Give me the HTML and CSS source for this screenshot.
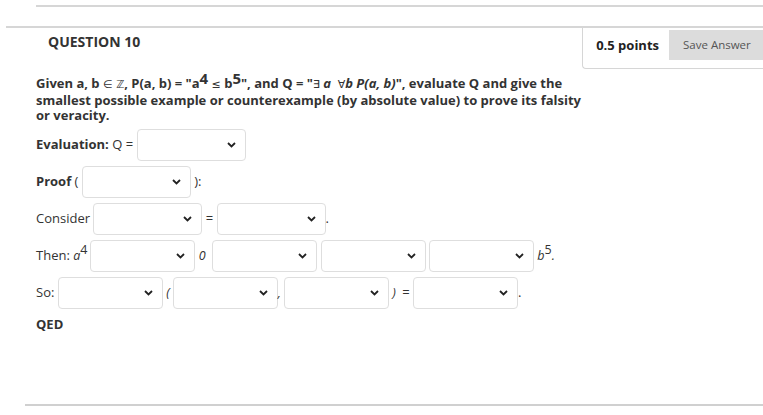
FILE: index.html
```html
<!DOCTYPE html>
<html>
<head>
	<title>Question 10</title>
	<meta charset="UTF-8">
	<link rel="stylesheet" href="styles.css">
</head>
<body>

<div class="topline"></div>

<div class="question">
	<div class="qhead">
		<h3 class="qtitle">QUESTION 10</h3>
		<div class="points">
			<span class="pts">0.5 points</span>
			<button class="save">Save Answer</button>
		</div>
	</div>

	<div class="qbody">
		<p class="prompt">Given a, b <span class="sym">&isin; &#8484;</span>, P(a, b) = "a<sup>4</sup> <span class="sym">&le;</span> b<sup>5</sup>", and Q = "<i><span class="sym">&exist;</span> a &nbsp;<span class="sym">&forall;</span>b P(a, b)</i>", evaluate Q and give the smallest possible example or counterexample (by absolute value) to prove its falsity or veracity.</p>

		<div class="row">
			<b>Evaluation:</b> Q = <select class="pick wide"><option></option><option>True</option><option>False</option></select>
		</div>

		<div class="row">
			<b>Proof</b> ( <select class="pick wide"><option></option></select> ):
		</div>

		<div class="row">
			Consider <select class="pick wide"><option></option></select> = <select class="pick wide"><option></option></select>.
		</div>

		<div class="row">
			Then: <span class="math">a<sup>4</sup></span><select class="pick"><option></option></select> <span class="math">0</span> <select class="pick"><option></option></select> <select class="pick"><option></option></select> <select class="pick"><option></option></select> <span class="math">b<sup>5</sup>.</span>
		</div>

		<div class="row">
			So: <select class="pick"><option></option></select> <span class="math">(</span><select class="pick"><option></option></select><span class="math">,</span><select class="pick"><option></option></select> <span class="math">)</span> = <select class="pick"><option></option></select>.
		</div>

		<p class="qed">QED</p>
	</div>
</div>

<div class="bottomline"></div>

</body>
</html>
```

FILE: styles.css
```css
body {
	margin: 0;
	font-family: "Open Sans", "Liberation Sans", sans-serif;
	font-size: 13px;
	color: #333;
	overflow: hidden;
}

.topline {
	margin: 5px 0 0 36px;
	border-top: 2px solid #d6d6d6;
}

.question {
	margin: 19px 0 0 6px;
	border-top: 2px solid #d6d6d6;
}

.qhead {
	display: flex;
	justify-content: space-between;
	align-items: flex-start;
}

.qtitle {
	margin: 4px 0 0 42px;
	font-size: 14px;
	font-weight: bold;
	color: #333;
}

.points {
	display: flex;
	align-items: center;
	gap: 10px;
	height: 41px;
	padding: 0 0 7px 13px;
	border-left: 1px solid #d6d6d6;
	border-bottom: 1px solid #d6d6d6;
	border-bottom-left-radius: 4px;
	box-sizing: border-box;
}

.pts {
	font-weight: bold;
	font-size: 13px;
	color: #222;
}

.save {
	width: 96px;
	height: 30px;
	margin-right: -2px;
	border: none;
	background: #dcdcdc;
	color: #555;
	font-family: "Open Sans", "Liberation Sans", sans-serif;
	font-size: 11.5px;
	text-align: left;
	padding-left: 14px;
}

.qbody {
	padding-left: 30px;
}

.prompt {
	width: 560px;
	margin: 7px 0 4px 0;
	font-weight: bold;
	line-height: 15.5px;
}

.prompt sup {
	font-size: 15px;
	line-height: 0;
	vertical-align: 4px;
}

.prompt i {
	font-weight: bold;
}

.sym {
	font-family: "DejaVu Sans", sans-serif;
	font-size: 11px;
	font-weight: normal;
}

.row {
	height: 32px;
	line-height: 32px;
	margin-bottom: 5px;
	white-space: nowrap;
}

.math {
	font-style: italic;
	font-size: 12.5px;
	margin-right: 3px;
}

.math sup {
	font-size: 12.5px;
	line-height: 0;
	vertical-align: 6px;
	font-style: normal;
}

.pick {
	appearance: none;
	-webkit-appearance: none;
	vertical-align: middle;
	width: 105px;
	height: 32px;
	margin: 0;
	border: 1px solid #dedede;
	border-radius: 4px;
	background: #fff url("data:image/svg+xml,%3Csvg xmlns='http://www.w3.org/2000/svg' width='9' height='6' viewBox='0 0 9 6'%3E%3Cpath d='M1 1l3.5 3.5L8 1' fill='none' stroke='%23222' stroke-width='1.8'/%3E%3C/svg%3E") no-repeat right 9px center;
	font-family: "Open Sans", "Liberation Sans", sans-serif;
	font-size: 13px;
}

.wide {
	width: 109px;
}

.qed {
	margin: 0;
	line-height: 22px;
	font-weight: bold;
}

.bottomline {
	position: absolute;
	top: 404px;
	left: 25px;
	right: 0;
	border-top: 2px solid #d0d0d0;
}
```
